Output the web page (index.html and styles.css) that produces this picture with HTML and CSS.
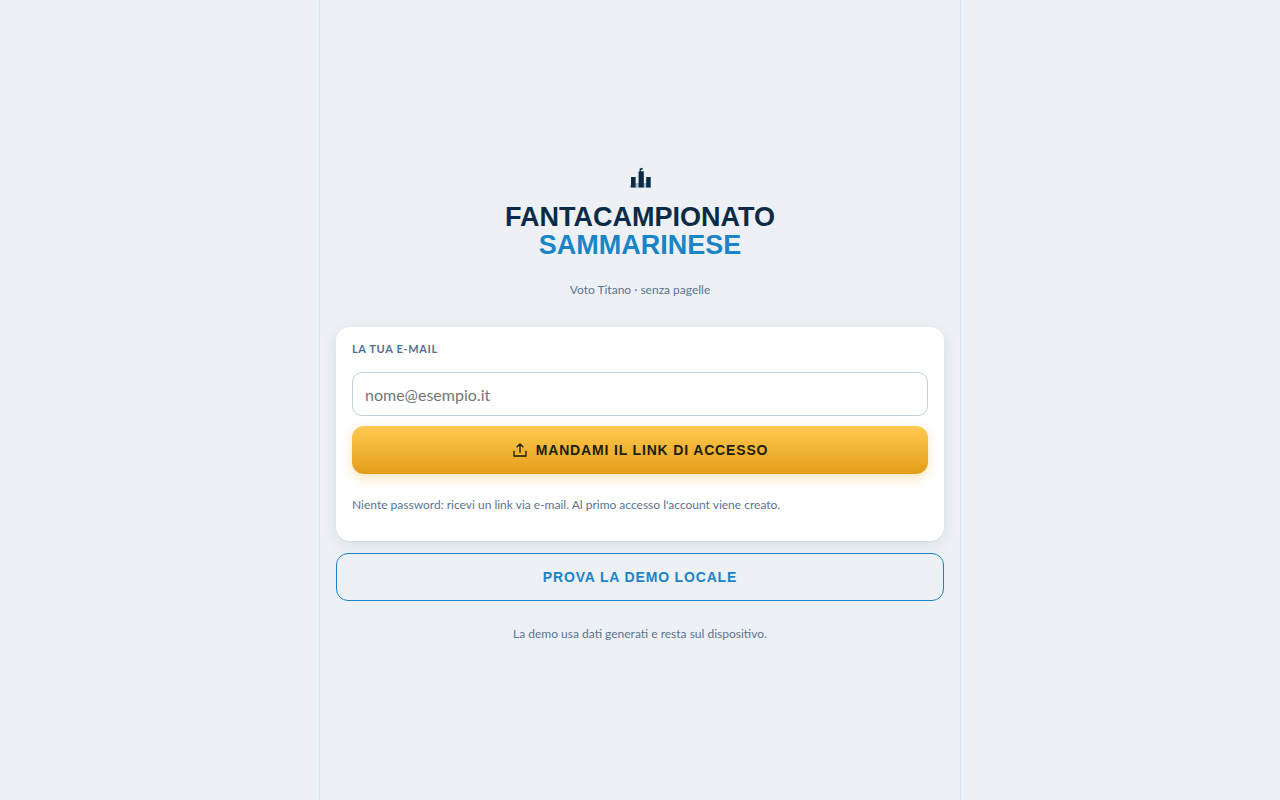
FILE: index.html
```
<!DOCTYPE html>
<html lang="it">
  <head>
    <meta charset="UTF-8" />
    <meta name="viewport" content="width=device-width, initial-scale=1.0" />
    <title>Fantacampionato Sammarinese</title>
    <link rel="stylesheet" href="styles.css">
  </head>
  <body>
    <main class="app">
      <header class="brand">
        <!-- le tre torri -->
        <svg class="logo" viewBox="0 0 24 24" aria-hidden="true">
          <path class="hill" d="M1 22.500l2.500-4.500h17l2.500 4.500z" />
          <path d="M3 22.500V12h4.600v10.500zM18.200 22.500V12h4.500v10.500zM10.600 22.500V6.500h1V3.500l3-.8v1.600l-1.800.9v1h3v16.300z" />
        </svg>
        <h1>Fantacampionato <span>Sammarinese</span></h1>
        <p class="hint">Voto Titano · senza pagelle</p>
      </header>

      <form class="card">
        <label for="email">La tua e-mail</label>
        <input id="email" type="email" placeholder="nome@esempio.it" />
        <button class="btn primary" type="submit">
          <svg class="icon" viewBox="0 0 24 24" aria-hidden="true">
            <path d="M12 16V3M7 8l5-5 5 5M3 13v8h18v-8" />
          </svg>
          Mandami il link di accesso
        </button>
        <p class="hint">Niente password: ricevi un link via e-mail. Al primo accesso l'account viene creato.</p>
      </form>

      <button class="btn ghost" type="button">Prova la demo locale</button>
      <p class="hint center">La demo usa dati generati e resta sul dispositivo.</p>
    </main>
  </body>
</html>
```
FILE: styles.css
```
* {
  box-sizing: border-box;
}

body {
  margin: 0;
  background: #edf1f6;
  color: #0b2a45;
  font-family: "Lato", sans-serif;
  font-size: 16px;
}

.app {
  display: flex;
  flex-direction: column;
  justify-content: center;
  max-width: 642px;
  min-height: 100vh;
  margin: 0 auto;
  padding: 36px 16px 16px;
  border-left: 1px solid #dae2ef;
  border-right: 1px solid #dae2ef;
}

.brand {
  display: flex;
  flex-direction: column;
  align-items: center;
  margin-bottom: 16px;
  text-align: center;
}

.logo {
  width: 24px;
  height: 24px;
  margin-bottom: 14px;
  fill: #0b2a45;
}

.logo .hill {
  fill: #a9bacb;
}

h1 {
  margin: 0 0 10px;
  font-family: "Liberation Sans", Arial, sans-serif;
  font-size: 27px;
  font-weight: 800;
  line-height: 28px;
  text-transform: uppercase;
}

h1 span {
  display: block;
  color: #1b84c6;
}

.hint {
  margin: 12px 0;
  color: #5a7391;
  font-size: 12px;
  line-height: 18px;
}

.center {
  text-align: center;
}

.card {
  display: flex;
  flex-direction: column;
  margin-bottom: 12px;
  padding: 16px 16px 15px;
  border-radius: 14px;
  background: #fff;
  box-shadow: 0 1px 2px rgba(11, 42, 69, 0.06), 0 4px 16px rgba(11, 42, 69, 0.08);
}

label {
  margin-bottom: 17px;
  color: #4f6f96;
  font-size: 11px;
  font-weight: 700;
  line-height: 12px;
  letter-spacing: 0.06em;
  text-transform: uppercase;
}

input {
  width: 100%;
  height: 44px;
  margin-bottom: 10px;
  padding: 0 12px;
  border: 1px solid #bdd0e3;
  border-radius: 10px;
  background: #fff;
  color: inherit;
  font: inherit;
}

input::placeholder {
  color: #757575;
}

.btn {
  display: flex;
  align-items: center;
  justify-content: center;
  gap: 8px;
  width: 100%;
  height: 48px;
  border: none;
  border-radius: 12px;
  font-family: "Liberation Sans", Arial, sans-serif;
  font-size: 14px;
  font-weight: 700;
  letter-spacing: 0.06em;
  text-transform: uppercase;
  cursor: pointer;
}

.primary {
  margin-bottom: 10px;
  background: linear-gradient(#ffc94f, #e49e19);
  color: #1c1e14;
  box-shadow: 0 4px 12px rgba(232, 163, 29, 0.3);
}

.ghost {
  border: 1px solid #1b84c6;
  background: transparent;
  color: #1b84c6;
}

.ghost + .hint {
  margin-top: 24px;
}

.icon {
  width: 16px;
  height: 16px;
  fill: none;
  stroke: currentColor;
  stroke-width: 2;
}
```
